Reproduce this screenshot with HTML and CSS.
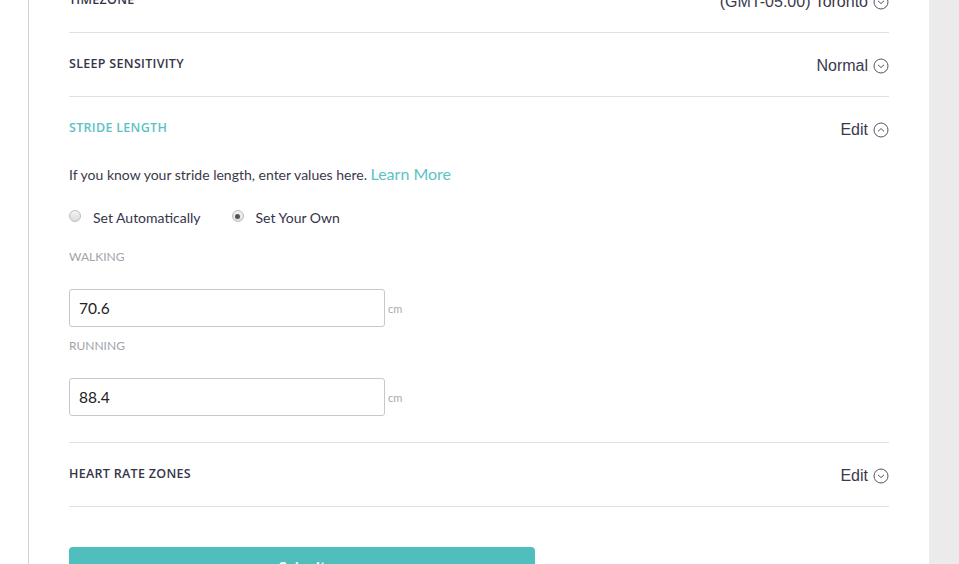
FILE: index.html
```html
<!DOCTYPE html>
<html>
<head>
<meta charset="utf-8">
<link rel="stylesheet" href="styles.css">
</head>
<body>
<div class="layout">
  <div class="gutter"></div>
  <main class="page">
    <div class="settings">
      <div class="row">
        <div class="row-head">
          <span class="label">TIMEZONE</span>
          <span class="value">(GMT-05:00) Toronto
            <svg class="chev" viewBox="0 0 16 16"><circle cx="8" cy="8" r="7" /><path d="M5 6.8 L8 9.6 L11 6.8" /></svg>
          </span>
        </div>
      </div>
      <div class="row">
        <div class="row-head">
          <span class="label">SLEEP SENSITIVITY</span>
          <span class="value">Normal
            <svg class="chev" viewBox="0 0 16 16"><circle cx="8" cy="8" r="7" /><path d="M5 6.8 L8 9.6 L11 6.8" /></svg>
          </span>
        </div>
      </div>
      <div class="row open">
        <div class="row-head">
          <span class="label teal">STRIDE LENGTH</span>
          <span class="value">Edit
            <svg class="chev" viewBox="0 0 16 16"><circle cx="8" cy="8" r="7" /><path d="M5 9.4 L8 6.6 L11 9.4" /></svg>
          </span>
        </div>
        <div class="row-body">
          <p class="intro">If you know your stride length, enter values here. <a class="learn" href="#">Learn More</a></p>
          <div class="radios">
            <label class="radio"><span class="dot"></span>Set Automatically</label>
            <label class="radio"><span class="dot on"></span>Set Your Own</label>
          </div>
          <div class="field">
            <div class="field-label">WALKING</div>
            <div class="field-input"><div class="input">70.6</div><span class="unit">cm</span></div>
          </div>
          <div class="field">
            <div class="field-label">RUNNING</div>
            <div class="field-input"><div class="input">88.4</div><span class="unit">cm</span></div>
          </div>
        </div>
      </div>
      <div class="row">
        <div class="row-head">
          <span class="label">HEART RATE ZONES</span>
          <span class="value">Edit
            <svg class="chev" viewBox="0 0 16 16"><circle cx="8" cy="8" r="7" /><path d="M5 6.8 L8 9.6 L11 6.8" /></svg>
          </span>
        </div>
      </div>
    </div>
    <button class="submit">Submit</button>
  </main>
  <div class="side"></div>
</div>
</body>
</html>
```
FILE: styles.css
```css
html, body {
  margin: 0;
  padding: 0;
  background: #fff;
  overflow: hidden;
}
.layout {
  display: flex;
  width: 959px;
  height: 564px;
}
.gutter {
  width: 28px;
  flex: none;
}
.page {
  flex: 1;
  border-left: 1px solid #d2d2d2;
  padding: 0 40px;
  font-family: Lato, "Liberation Sans", sans-serif;
  color: #34344a;
}
.side {
  width: 30px;
  flex: none;
  background: #ebebeb;
}
.settings {
  margin-top: -31px;
}
.row {
  border-bottom: 1px solid #dfdfe7;
}
.row-head {
  height: 63px;
  display: flex;
  align-items: center;
  justify-content: space-between;
}
.label {
  font-family: "Open Sans", Lato, sans-serif;
  font-size: 12.5px;
  font-weight: 600;
  letter-spacing: 0.3px;
  color: #34344a;
  margin-top: -3px;
}
.label.teal {
  color: #5cc2c6;
}
.value {
  font-family: "Liberation Sans", Arial, sans-serif;
  font-size: 16px;
  color: #3a3a4c;
  display: flex;
  align-items: center;
  gap: 5px;
  margin-top: 2px;
}
.chev {
  width: 16px;
  height: 16px;
  fill: none;
  stroke: #555560;
  stroke-width: 1;
}
.row-body {
  padding-bottom: 26px;
}
.intro {
  margin: 4px 0 0;
  font-size: 14px;
  line-height: 20px;
  color: #3a3a4a;
}
.learn {
  color: #5cc2c6;
  text-decoration: none;
  font-size: 16px;
}
.radios {
  display: flex;
  gap: 31px;
  margin-top: 23px;
  height: 20px;
  align-items: center;
}
.radio {
  display: flex;
  align-items: center;
  gap: 12px;
  font-size: 14px;
  color: #34344a;
  margin-top: -2px;
}
.dot {
  width: 10px;
  height: 10px;
  border-radius: 50%;
  border: 1px solid #bdbdbd;
  background: linear-gradient(#f4f4f4, #dcdcdc);
  position: relative;
  margin-top: -2px;
}
.dot.on::after {
  content: "";
  position: absolute;
  left: 2.5px;
  top: 2.5px;
  width: 5px;
  height: 5px;
  border-radius: 50%;
  background: #555;
}
.field {
  margin-top: 11px;
}
.radios + .field {
  margin-top: 21px;
}
.field-label {
  font-size: 12px;
  line-height: 16px;
  color: #a3a3ab;
  margin-bottom: 24px;
}
.field-input {
  display: flex;
  align-items: center;
  gap: 3px;
}
.input {
  width: 296px;
  height: 36px;
  border: 1px solid #c8c8cc;
  border-radius: 3px;
  padding: 0 9px;
  display: flex;
  align-items: center;
  font-size: 15.5px;
  color: #222;
}
.unit {
  font-size: 11px;
  color: #a9a9b0;
  margin-top: 1px;
}
.submit {
  display: block;
  margin-top: 40px;
  width: 466px;
  height: 40px;
  border: none;
  border-radius: 4px;
  background: #4fbfbe;
  color: #fff;
  font-family: Lato, "Liberation Sans", sans-serif;
  font-size: 15px;
  font-weight: 700;
}
```
